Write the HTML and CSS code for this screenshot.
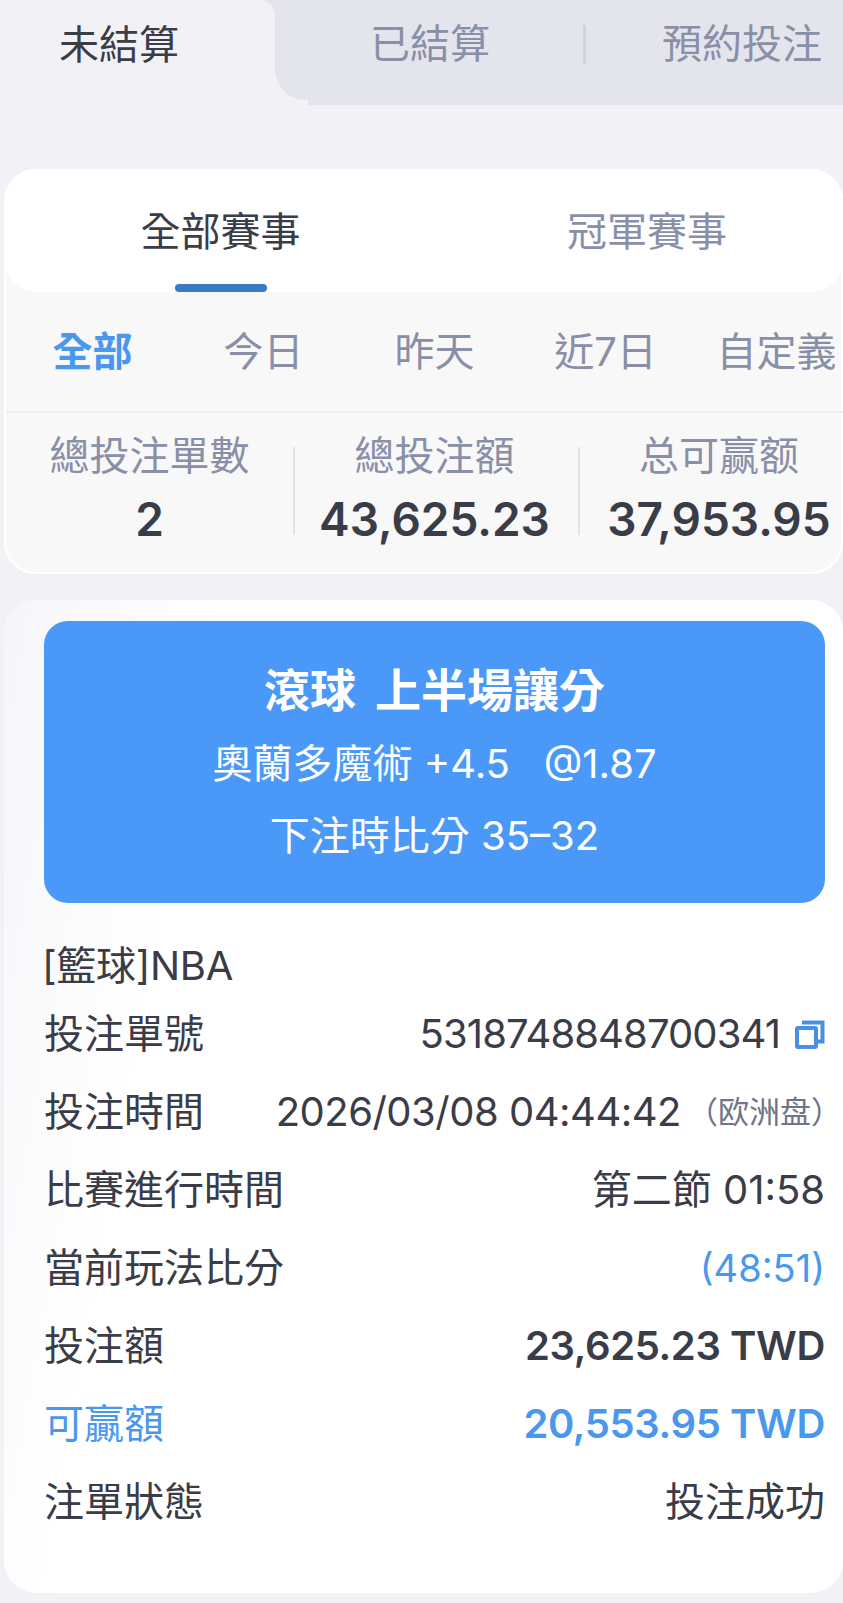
FILE: index.html
```html
<!DOCTYPE html>
<html lang="zh-Hant">
<head>
  <meta charset="UTF-8">
  <meta name="viewport" content="width=device-width, initial-scale=1.0">
  <title>未結算</title>
  <link rel="stylesheet" href="styles.css">
</head>
<body>
  <div class="tabs">
    <div class="tab-active">未結算</div>
    <div class="tab-rest">
      <div class="tab-done">已結算</div>
      <div class="tab-sep"></div>
      <div class="tab-book">預約投注</div>
    </div>
  </div>

  <div class="summary">
    <div class="type-panel">
      <div class="type-tab type-on">
        <span>全部賽事</span>
        <i class="indicator"></i>
      </div>
      <div class="type-tab type-off">
        <span>冠軍賽事</span>
      </div>
    </div>

    <div class="filters">
      <span class="filter-on">全部</span>
      <span>今日</span>
      <span>昨天</span>
      <span>近7日</span>
      <span>自定義</span>
    </div>

    <div class="stats">
      <div class="stat">
        <div class="stat-label">總投注單數</div>
        <div class="stat-value">2</div>
      </div>
      <div class="stat-sep"></div>
      <div class="stat stat-mid">
        <div class="stat-label">總投注額</div>
        <div class="stat-value">43,625.23</div>
      </div>
      <div class="stat-sep"></div>
      <div class="stat">
        <div class="stat-label">总可赢额</div>
        <div class="stat-value">37,953.95</div>
      </div>
    </div>
  </div>

  <div class="bet">
    <div class="bet-head">
      <div class="bet-title">滾球 上半場讓分</div>
      <div class="bet-pick">奧蘭多魔術 +4.5 &nbsp; @1.87</div>
      <div class="bet-score">下注時比分 35–32</div>
    </div>

    <div class="league">[籃球]NBA</div>
    <div class="row">
      <span>投注單號</span>
      <span class="row-value">
        <span class="bet-no">5318748848700341</span>
        <svg class="copy" viewBox="0 0 30 29" width="30" height="29" fill="none" stroke="#4a90e2" stroke-width="4">
          <rect x="2" y="8" width="19" height="19" rx="1"/>
          <path d="M7 2.5h20.5v19h-6.5"/>
        </svg>
      </span>
    </div>
    <div class="row">
      <span>投注時間</span>
      <span class="row-value"><span class="bet-time">2026/03/08 04:44:42</span><em class="market">（欧洲盘）</em></span>
    </div>
    <div class="row">
      <span>比賽進行時間</span>
      <span class="row-value">第二節 01:58</span>
    </div>
    <div class="row">
      <span>當前玩法比分</span>
      <span class="row-value row-blue row-score">(48:51)</span>
    </div>
    <div class="row">
      <span>投注額</span>
      <span class="row-value row-bold">23,625.23 TWD</span>
    </div>
    <div class="row row-blue">
      <span>可贏額</span>
      <span class="row-value row-bold">20,553.95 TWD</span>
    </div>
    <div class="row">
      <span>注單狀態</span>
      <span class="row-value">投注成功</span>
    </div>
  </div>
</body>
</html>
```

FILE: styles.css
```css
html {
  overflow: hidden;
}
body {
  margin: 0;
  padding: 0;
  background-color: #f2f2f6;
  color: #3a3c47;
  font-family: Inter, "Noto Sans CJK TC", sans-serif;
  font-size: 40px;
  line-height: 50px;
  font-weight: 400;
}

.tabs {
  display: flex;
  height: 105px;
  background: linear-gradient(#e3e4ec, #e3e4ec) no-repeat 255px 0 / 30px 30px;
}
.tab-active {
  box-sizing: border-box;
  width: 275px;
  padding: 20px 0 0 59px;
  background-color: #f2f2f6;
  border-top-right-radius: 16px;
}
.tab-rest {
  position: relative;
  flex: 1;
  display: flex;
  align-items: center;
  height: 100px;
  padding-bottom: 12px;
  box-sizing: border-box;
  background-color: #e3e4ec;
  border-bottom-left-radius: 30px;
  color: #8a8fa8;
}
.tab-rest::after {
  content: "";
  position: absolute;
  left: 33px;
  right: 0;
  bottom: -5px;
  height: 5px;
  background-color: #e3e4ec;
}
.tab-done {
  width: 308px;
  padding-left: 2px;
  box-sizing: border-box;
  text-align: center;
}
.tab-sep {
  width: 3px;
  height: 39px;
  background-color: #d0d2dc;
}
.tab-book {
  padding-left: 76px;
}

.summary {
  box-sizing: border-box;
  height: 405px;
  margin: 64px 0 0 4px;
  background-color: #f8f8f9;
  border: 2px solid #fff;
  border-radius: 32px;
}
.type-panel {
  display: flex;
  height: 123px;
  margin: -2px -2px 0;
  background-color: #fff;
  border-radius: 32px;
}
.type-tab {
  display: flex;
  flex-direction: column;
  align-items: center;
  padding-top: 38px;
}
.type-on {
  width: 433px;
}
.type-off {
  flex: 1;
  padding-left: 14px;
  color: #8a8fa8;
}
.indicator {
  display: block;
  width: 92px;
  height: 11px;
  margin-top: 27px;
  background-color: #3a7ac4;
  border-radius: 5px;
}

.filters {
  display: grid;
  grid-template-columns: repeat(5, 171px);
  justify-items: center;
  align-items: center;
  height: 119px;
  margin-right: -20px;
  padding-left: 1px;
  border-bottom: 2px solid #efeff2;
  color: #8a8fa8;
}
.filter-on {
  color: #4a98ee;
  font-weight: 700;
}

.stats {
  display: grid;
  grid-template-columns: 287px 2px 283px 2px 278px;
  margin-right: -20px;
}
.stat {
  text-align: center;
  padding-top: 18px;
}
.stat-mid {
  padding-right: 4px;
}
.stat-label {
  color: #8a8fa8;
}
.stat-value {
  margin-top: 13px;
  font-size: 46px;
  font-weight: 600;
}
.stat-sep {
  height: 88px;
  margin-top: 34px;
  background-color: #e3e4ea;
}

.bet {
  box-sizing: border-box;
  height: 993px;
  margin: 26px 0 0 4px;
  padding: 21px 18px 0 40px;
  background: linear-gradient(100deg, #f6f6f9 0, #fff 22%);
  border-radius: 32px;
}
.bet-head {
  height: 282px;
  padding-top: 44px;
  box-sizing: border-box;
  background-color: #4a98f7;
  border-radius: 24px;
  color: #fff;
  text-align: center;
}
.bet-title {
  font-size: 46px;
  font-weight: 700;
  word-spacing: 8px;
}
.bet-pick {
  margin-top: 24px;
}
.bet-score {
  margin-top: 22px;
}

.league {
  height: 58px;
  margin: 34px 0 0 -2px;
  display: flex;
  align-items: center;
  letter-spacing: -0.3px;
}
.row {
  display: flex;
  justify-content: space-between;
  align-items: center;
  height: 78px;
}
.row-value {
  display: flex;
  align-items: center;
}
.row-blue {
  color: #4a98ee;
}
.row-bold {
  font-weight: 600;
  letter-spacing: -0.4px;
}
.row-score {
  font-size: 38px;
}
.bet-no {
  letter-spacing: -0.9px;
}
.bet-time {
  letter-spacing: -0.5px;
}
.copy {
  margin-left: 15px;
}
.market {
  margin: 0 -17px 0 6px;
  font-style: normal;
  font-size: 31px;
  color: #6f7488;
}
```
